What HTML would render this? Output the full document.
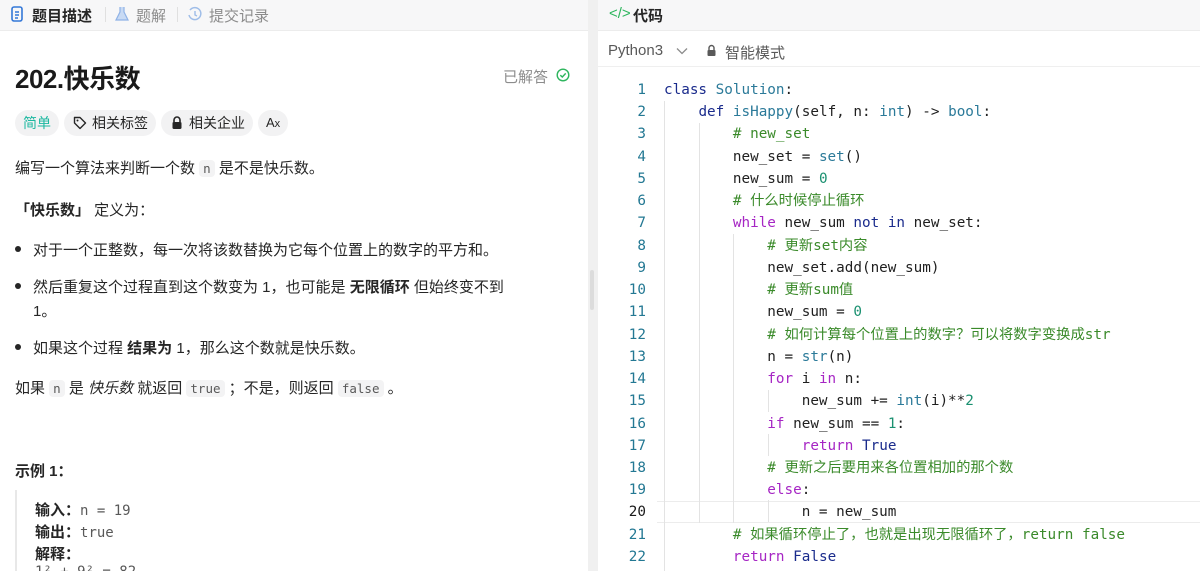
<!DOCTYPE html>
<html><head><meta charset="utf-8"><style>
*{margin:0;padding:0;box-sizing:border-box}
body{width:1200px;height:571px;overflow:hidden;background:#f0f0f0;font-family:"Liberation Sans","Noto Sans CJK SC",sans-serif;color:#262626;position:relative}
.abs{position:absolute;white-space:nowrap}
#left{position:absolute;left:0;top:0;width:588px;height:571px;background:#fff;overflow:hidden}
#right{position:absolute;left:598px;top:0;width:602px;height:571px;background:#fff;overflow:hidden}
.hdr{position:absolute;left:0;top:0;right:0;height:31px;background:#f7f7f8;border-bottom:1px solid #ececec}
.t{font-size:15px}
code.c{font-family:"DejaVu Sans Mono",monospace;font-size:12.5px;background:#f3f3f4;border-radius:4px;padding:1px 4px;color:#595959}
.tag{position:absolute;top:110px;height:26px;border-radius:13px;background:#f2f2f3;font-size:14px;line-height:26px;padding:0 8px;color:#262626}
.code{position:absolute;left:66px;font-family:"DejaVu Sans Mono","Noto Sans CJK SC",monospace;font-size:14.3px;color:#1f1f1f;white-space:pre;line-height:22.24px}
.ln{position:absolute;left:0;width:48px;text-align:right;font-family:"DejaVu Sans Mono",monospace;font-size:14.3px;color:#237893;line-height:22.24px}
.k{color:#1a2b8c}.p{color:#a626c4}.cm{color:#3a8a2a;font-family:"DejaVu Sans Mono","Noto Sans CJK SC",monospace}.n{color:#1a9070}.b{color:#2b7a99}
.g{position:absolute;width:1px;background:#e3e3e3}
</style></head><body>
<div id="left">
 <div class="hdr"></div>
 <svg class="abs" style="left:11px;top:6px" width="12" height="16" viewBox="0 0 12 16"><rect x="1" y="1" width="10" height="14" rx="2" fill="none" stroke="#3478d8" stroke-width="1.6"/><path d="M4 6h4M4 9h4M4 12h3" stroke="#3478d8" stroke-width="1.4"/></svg>
 <div class="abs" style="left:32px;top:5px;font-size:15px;font-weight:bold">题目描述</div>
 <div class="abs" style="left:105px;top:7px;width:1px;height:15px;background:#e0e0e0"></div>
 <svg class="abs" style="left:115px;top:6px" width="14" height="16" viewBox="0 0 14 16"><path d="M5 1v5L1 14h12L9 6V1" fill="#c8daf4" stroke="#8fb2e6" stroke-width="1.2"/></svg>
 <div class="abs" style="left:136px;top:5px;font-size:15px;color:#8c8c8c">题解</div>
 <div class="abs" style="left:177px;top:7px;width:1px;height:15px;background:#e0e0e0"></div>
 <svg class="abs" style="left:187px;top:6px" width="16" height="16" viewBox="0 0 16 16"><path d="M3 4a6 6 0 1 1-1 5" fill="none" stroke="#9fbde8" stroke-width="1.5"/><path d="M8 5v4l2 1" stroke="#9fbde8" stroke-width="1.4" fill="none"/></svg>
 <div class="abs" style="left:209px;top:5px;font-size:15px;color:#8c8c8c">提交记录</div>

 <div class="abs" style="left:15px;top:59px;font-size:26px;font-weight:bold;color:#1a1a1a;letter-spacing:-0.5px">202.快乐数</div>
 <div class="abs" style="left:503px;top:66px;font-size:15px;color:#8c8c8c">已解答</div>
 <svg class="abs" style="left:556px;top:68px" width="14" height="14" viewBox="0 0 14 14"><circle cx="7" cy="7" r="5.8" fill="none" stroke="#2db55d" stroke-width="1.4"/><path d="M4.3 7.2l2 1.8 3.4-3.6" fill="none" stroke="#2db55d" stroke-width="1.4"/></svg>

 <div class="tag" style="left:15px;color:#1cb8a0">简单</div>
 <div class="tag" style="left:64px;padding-left:28px">相关标签</div>
 <svg class="abs" style="left:73px;top:116px" width="14" height="14" viewBox="0 0 14 14"><path d="M1.5 1.5h5.5l5.5 5.5-5.5 5.5-5.5-5.5z" fill="none" stroke="#262626" stroke-width="1.4" stroke-linejoin="round"/><circle cx="4.5" cy="4.5" r="1" fill="#262626"/></svg>
 <div class="tag" style="left:161px;padding-left:28px">相关企业</div>
 <svg class="abs" style="left:171px;top:116px" width="12" height="14" viewBox="0 0 12 14"><path d="M3 6V4a3 3 0 0 1 6 0v2" fill="none" stroke="#262626" stroke-width="1.6"/><rect x="1.5" y="6" width="9" height="7" rx="1.2" fill="#262626"/></svg>
 <div class="tag" style="left:258px;font-size:13px">A<span style="font-size:11px">x</span></div>

 <div class="abs t" style="left:15px;top:157px">编写一个算法来判断一个数 <code class="c">n</code> 是不是快乐数。</div>
 <div class="abs t" style="left:15px;top:199px"><b>「快乐数」</b> 定义为：</div>
 <div class="abs" style="left:15px;top:246px;width:6px;height:6px;border-radius:3px;background:#262626"></div>
 <div class="abs t" style="left:33px;top:239px">对于一个正整数，每一次将该数替换为它每个位置上的数字的平方和。</div>
 <div class="abs" style="left:15px;top:283px;width:6px;height:6px;border-radius:3px;background:#262626"></div>
 <div class="abs t" style="left:33px;top:276px">然后重复这个过程直到这个数变为 1，也可能是 <b>无限循环</b> 但始终变不到</div>
 <div class="abs t" style="left:33px;top:300px">1。</div>
 <div class="abs" style="left:15px;top:344px;width:6px;height:6px;border-radius:3px;background:#262626"></div>
 <div class="abs t" style="left:33px;top:337px">如果这个过程 <b>结果为</b> 1，那么这个数就是快乐数。</div>
 <div class="abs t" style="left:15px;top:377px">如果 <code class="c">n</code> 是 <i>快乐数</i> 就返回 <code class="c">true</code> ；不是，则返回 <code class="c">false</code> 。</div>
 <div class="abs t" style="left:15px;top:460px;font-weight:bold">示例 1：</div>
 <div class="abs" style="left:15px;top:490px;width:2px;height:90px;background:#e8e8e8"></div>
 <div class="abs t" style="left:35px;top:499px"><b>输入：</b><span style="font-family:'DejaVu Sans Mono',monospace;font-size:14px;color:#595959">n = 19</span></div>
 <div class="abs t" style="left:35px;top:521px"><b>输出：</b><span style="font-family:'DejaVu Sans Mono',monospace;font-size:14px;color:#595959">true</span></div>
 <div class="abs t" style="left:35px;top:543px"><b>解释：</b></div>
 <div class="abs" style="left:35px;top:564px;font-family:'DejaVu Sans Mono',monospace;font-size:14px;color:#595959">1² + 9² = 82</div>
</div>
<div class="abs" style="left:590px;top:270px;width:4px;height:40px;background:#dcdcdc;border-radius:2px"></div>

<div id="right">
 <div class="hdr"></div>
 <div class="abs" style="left:11px;top:5px;font-size:15px;color:#2db55d">&lt;/&gt;</div>
 <div class="abs" style="left:35px;top:5px;font-size:15px;font-weight:bold">代码</div>
 <div class="abs" style="left:0;top:66px;width:602px;height:1px;background:#efefef"></div>
 <div class="abs" style="left:10px;top:42px;font-size:15px;color:#595959">Python3</div>
 <svg class="abs" style="left:78px;top:47px" width="12" height="8" viewBox="0 0 12 8"><path d="M1 1.5l5 5 5-5" fill="none" stroke="#8c8c8c" stroke-width="1.3"/></svg>
 <svg class="abs" style="left:108px;top:44px" width="11" height="13" viewBox="0 0 11 13"><path d="M3 6V4a2.5 2.5 0 0 1 5 0v2" fill="none" stroke="#595959" stroke-width="1.4"/><rect x="1.5" y="6" width="8" height="6" rx="1" fill="#595959"/></svg>
 <div class="abs" style="left:127px;top:42px;font-size:15px;color:#595959">智能模式</div>

 <div class="abs" style="left:59px;top:501px;width:543px;height:22px;border-top:1px solid #ececec;border-bottom:1px solid #ececec"></div>
 <div class="g" style="left:66px;top:101px;height:470px"></div>
 <div class="g" style="left:101px;top:123px;height:400px"></div>
 <div class="g" style="left:135px;top:234px;height:289px"></div>
 <div class="g" style="left:170px;top:390px;height:22px"></div>
 <div class="g" style="left:170px;top:434px;height:22px"></div>
 <div class="g" style="left:170px;top:500px;height:22px"></div>

 <div class="ln" style="top:79px">1<br>2<br>3<br>4<br>5<br>6<br>7<br>8<br>9<br>10<br>11<br>12<br>13<br>14<br>15<br>16<br>17<br>18<br>19<br><span style="color:#1a1a1a">20</span><br>21<br>22</div>
 <div class="code" style="top:79px"><span class="k">class</span> <span class="b">Solution</span>:
    <span class="k">def</span> <span class="b">isHappy</span>(self, n: <span class="b">int</span>) -&gt; <span class="b">bool</span>:
        <span class="cm"># new_set</span>
        new_set = <span class="b">set</span>()
        new_sum = <span class="n">0</span>
        <span class="cm"># 什么时候停止循环</span>
        <span class="p">while</span> new_sum <span class="k">not in</span> new_set:
            <span class="cm"># 更新set内容</span>
            new_set.add(new_sum)
            <span class="cm"># 更新sum值</span>
            new_sum = <span class="n">0</span>
            <span class="cm"># 如何计算每个位置上的数字？可以将数字变换成str</span>
            n = <span class="b">str</span>(n)
            <span class="p">for</span> i <span class="p">in</span> n:
                new_sum += <span class="b">int</span>(i)**<span class="n">2</span>
            <span class="p">if</span> new_sum == <span class="n">1</span>:
                <span class="p">return</span> <span class="k">True</span>
            <span class="cm"># 更新之后要用来各位置相加的那个数</span>
            <span class="p">else</span>:
                n = new_sum
        <span class="cm"># 如果循环停止了，也就是出现无限循环了，return false</span>
        <span class="p">return</span> <span class="k">False</span></div>
</div>
</body></html>
